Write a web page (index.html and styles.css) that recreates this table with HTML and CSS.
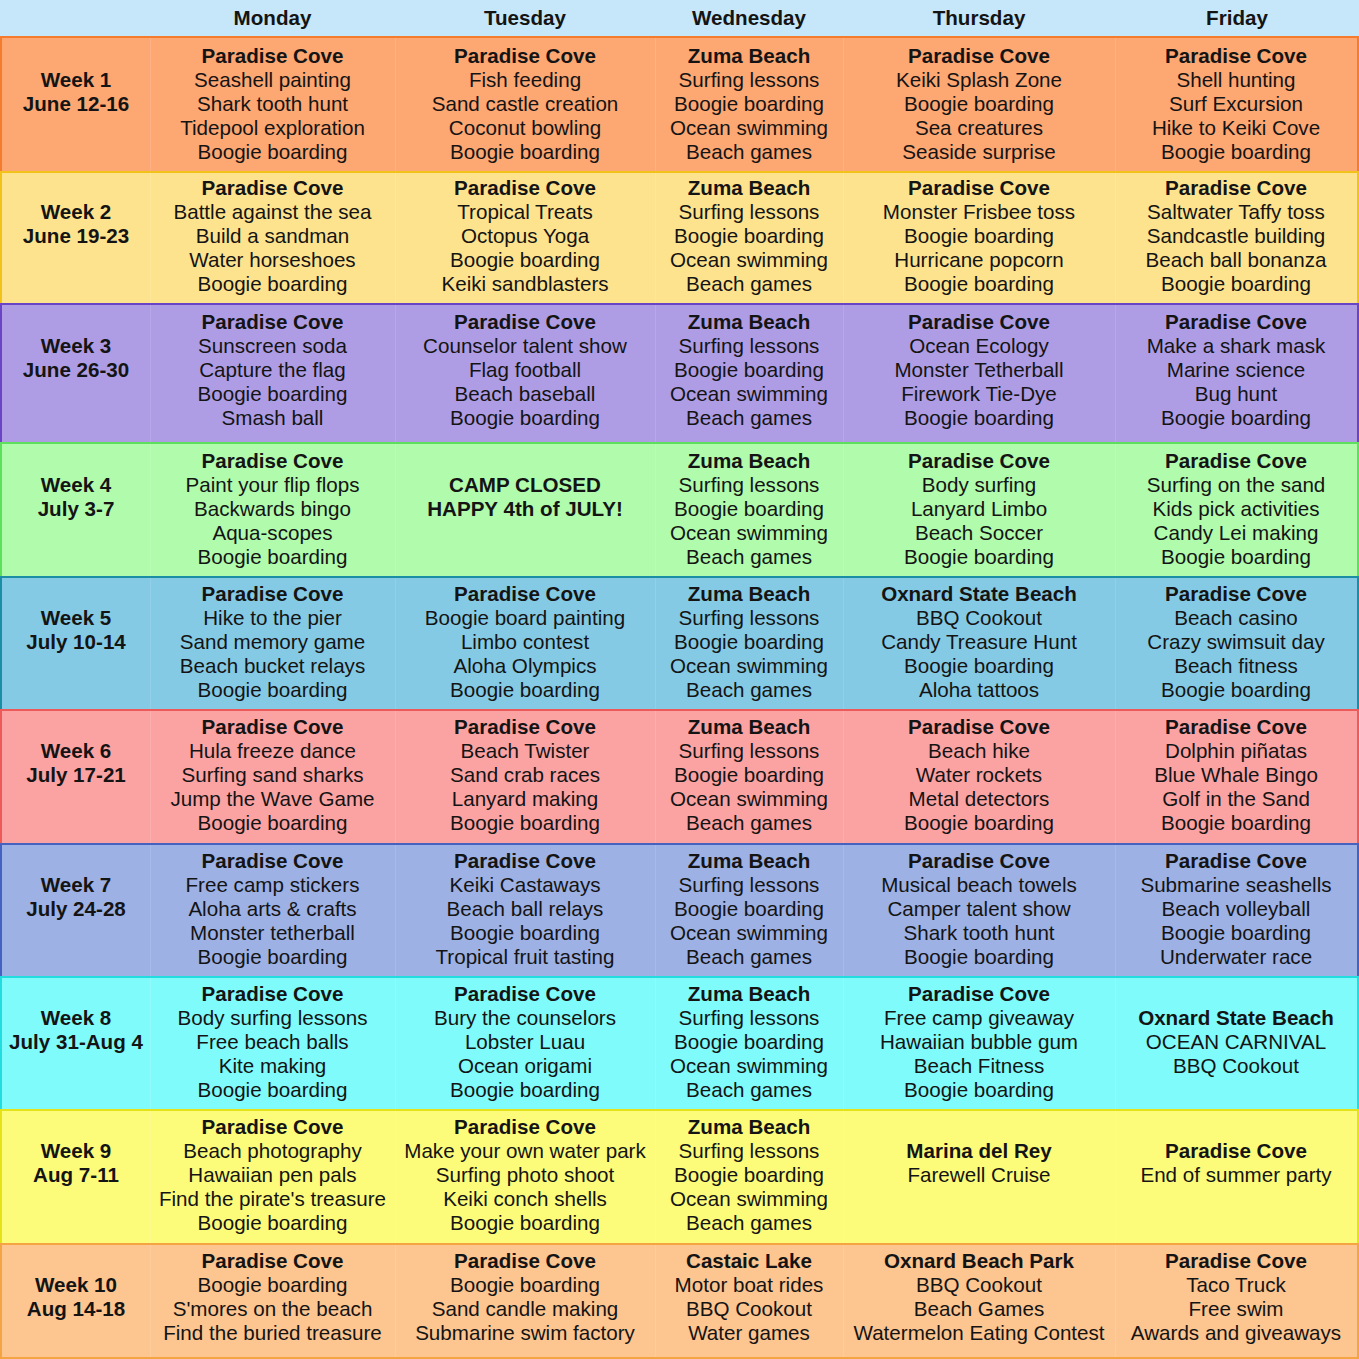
FILE: index.html
```html
<!DOCTYPE html>
<html>
<head>
<meta charset="utf-8">
<link rel="stylesheet" href="styles.css">
</head>
<body>
<div class="schedule">
  <div class="row head">
    <div class="cell"></div>
    <div class="cell"><b>Monday</b></div>
    <div class="cell"><b>Tuesday</b></div>
    <div class="cell"><b>Wednesday</b></div>
    <div class="cell"><b>Thursday</b></div>
    <div class="cell"><b>Friday</b></div>
  </div>

  <div class="row w1">
    <div class="cell label"><b>Week 1</b><b>June 12-16</b></div>
    <div class="cell"><b>Paradise Cove</b><span>Seashell painting</span><span>Shark tooth hunt</span><span>Tidepool exploration</span><span>Boogie boarding</span></div>
    <div class="cell"><b>Paradise Cove</b><span>Fish feeding</span><span>Sand castle creation</span><span>Coconut bowling</span><span>Boogie boarding</span></div>
    <div class="cell"><b>Zuma Beach</b><span>Surfing lessons</span><span>Boogie boarding</span><span>Ocean swimming</span><span>Beach games</span></div>
    <div class="cell"><b>Paradise Cove</b><span>Keiki Splash Zone</span><span>Boogie boarding</span><span>Sea creatures</span><span>Seaside surprise</span></div>
    <div class="cell"><b>Paradise Cove</b><span>Shell hunting</span><span>Surf Excursion</span><span>Hike to Keiki Cove</span><span>Boogie boarding</span></div>
  </div>

  <div class="row w2">
    <div class="cell label"><b>Week 2</b><b>June 19-23</b></div>
    <div class="cell"><b>Paradise Cove</b><span>Battle against the sea</span><span>Build a sandman</span><span>Water horseshoes</span><span>Boogie boarding</span></div>
    <div class="cell"><b>Paradise Cove</b><span>Tropical Treats</span><span>Octopus Yoga</span><span>Boogie boarding</span><span>Keiki sandblasters</span></div>
    <div class="cell"><b>Zuma Beach</b><span>Surfing lessons</span><span>Boogie boarding</span><span>Ocean swimming</span><span>Beach games</span></div>
    <div class="cell"><b>Paradise Cove</b><span>Monster Frisbee toss</span><span>Boogie boarding</span><span>Hurricane popcorn</span><span>Boogie boarding</span></div>
    <div class="cell"><b>Paradise Cove</b><span>Saltwater Taffy toss</span><span>Sandcastle building</span><span>Beach ball bonanza</span><span>Boogie boarding</span></div>
  </div>

  <div class="row w3">
    <div class="cell label"><b>Week 3</b><b>June 26-30</b></div>
    <div class="cell"><b>Paradise Cove</b><span>Sunscreen soda</span><span>Capture the flag</span><span>Boogie boarding</span><span>Smash ball</span></div>
    <div class="cell"><b>Paradise Cove</b><span>Counselor talent show</span><span>Flag football</span><span>Beach baseball</span><span>Boogie boarding</span></div>
    <div class="cell"><b>Zuma Beach</b><span>Surfing lessons</span><span>Boogie boarding</span><span>Ocean swimming</span><span>Beach games</span></div>
    <div class="cell"><b>Paradise Cove</b><span>Ocean Ecology</span><span>Monster Tetherball</span><span>Firework Tie-Dye</span><span>Boogie boarding</span></div>
    <div class="cell"><b>Paradise Cove</b><span>Make a shark mask</span><span>Marine science</span><span>Bug hunt</span><span>Boogie boarding</span></div>
  </div>

  <div class="row w4">
    <div class="cell label"><b>Week 4</b><b>July 3-7</b></div>
    <div class="cell"><b>Paradise Cove</b><span>Paint your flip flops</span><span>Backwards bingo</span><span>Aqua-scopes</span><span>Boogie boarding</span></div>
    <div class="cell label"><b>CAMP CLOSED</b><b>HAPPY 4th of JULY!</b></div>
    <div class="cell"><b>Zuma Beach</b><span>Surfing lessons</span><span>Boogie boarding</span><span>Ocean swimming</span><span>Beach games</span></div>
    <div class="cell"><b>Paradise Cove</b><span>Body surfing</span><span>Lanyard Limbo</span><span>Beach Soccer</span><span>Boogie boarding</span></div>
    <div class="cell"><b>Paradise Cove</b><span>Surfing on the sand</span><span>Kids pick activities</span><span>Candy Lei making</span><span>Boogie boarding</span></div>
  </div>

  <div class="row w5">
    <div class="cell label"><b>Week 5</b><b>July 10-14</b></div>
    <div class="cell"><b>Paradise Cove</b><span>Hike to the pier</span><span>Sand memory game</span><span>Beach bucket relays</span><span>Boogie boarding</span></div>
    <div class="cell"><b>Paradise Cove</b><span>Boogie board painting</span><span>Limbo contest</span><span>Aloha Olympics</span><span>Boogie boarding</span></div>
    <div class="cell"><b>Zuma Beach</b><span>Surfing lessons</span><span>Boogie boarding</span><span>Ocean swimming</span><span>Beach games</span></div>
    <div class="cell"><b>Oxnard State Beach</b><span>BBQ Cookout</span><span>Candy Treasure Hunt</span><span>Boogie boarding</span><span>Aloha tattoos</span></div>
    <div class="cell"><b>Paradise Cove</b><span>Beach casino</span><span>Crazy swimsuit day</span><span>Beach fitness</span><span>Boogie boarding</span></div>
  </div>

  <div class="row w6">
    <div class="cell label"><b>Week 6</b><b>July 17-21</b></div>
    <div class="cell"><b>Paradise Cove</b><span>Hula freeze dance</span><span>Surfing sand sharks</span><span>Jump the Wave Game</span><span>Boogie boarding</span></div>
    <div class="cell"><b>Paradise Cove</b><span>Beach Twister</span><span>Sand crab races</span><span>Lanyard making</span><span>Boogie boarding</span></div>
    <div class="cell"><b>Zuma Beach</b><span>Surfing lessons</span><span>Boogie boarding</span><span>Ocean swimming</span><span>Beach games</span></div>
    <div class="cell"><b>Paradise Cove</b><span>Beach hike</span><span>Water rockets</span><span>Metal detectors</span><span>Boogie boarding</span></div>
    <div class="cell"><b>Paradise Cove</b><span>Dolphin piñatas</span><span>Blue Whale Bingo</span><span>Golf in the Sand</span><span>Boogie boarding</span></div>
  </div>

  <div class="row w7">
    <div class="cell label"><b>Week 7</b><b>July 24-28</b></div>
    <div class="cell"><b>Paradise Cove</b><span>Free camp stickers</span><span>Aloha arts &amp; crafts</span><span>Monster tetherball</span><span>Boogie boarding</span></div>
    <div class="cell"><b>Paradise Cove</b><span>Keiki Castaways</span><span>Beach ball relays</span><span>Boogie boarding</span><span>Tropical fruit tasting</span></div>
    <div class="cell"><b>Zuma Beach</b><span>Surfing lessons</span><span>Boogie boarding</span><span>Ocean swimming</span><span>Beach games</span></div>
    <div class="cell"><b>Paradise Cove</b><span>Musical beach towels</span><span>Camper talent show</span><span>Shark tooth hunt</span><span>Boogie boarding</span></div>
    <div class="cell"><b>Paradise Cove</b><span>Submarine seashells</span><span>Beach volleyball</span><span>Boogie boarding</span><span>Underwater race</span></div>
  </div>

  <div class="row w8">
    <div class="cell label"><b>Week 8</b><b>July 31-Aug 4</b></div>
    <div class="cell"><b>Paradise Cove</b><span>Body surfing lessons</span><span>Free beach balls</span><span>Kite making</span><span>Boogie boarding</span></div>
    <div class="cell"><b>Paradise Cove</b><span>Bury the counselors</span><span>Lobster Luau</span><span>Ocean origami</span><span>Boogie boarding</span></div>
    <div class="cell"><b>Zuma Beach</b><span>Surfing lessons</span><span>Boogie boarding</span><span>Ocean swimming</span><span>Beach games</span></div>
    <div class="cell"><b>Paradise Cove</b><span>Free camp giveaway</span><span>Hawaiian bubble gum</span><span>Beach Fitness</span><span>Boogie boarding</span></div>
    <div class="cell label"><b>Oxnard State Beach</b><span>OCEAN CARNIVAL</span><span>BBQ Cookout</span></div>
  </div>

  <div class="row w9">
    <div class="cell label"><b>Week 9</b><b>Aug 7-11</b></div>
    <div class="cell"><b>Paradise Cove</b><span>Beach photography</span><span>Hawaiian pen pals</span><span>Find the pirate's treasure</span><span>Boogie boarding</span></div>
    <div class="cell"><b>Paradise Cove</b><span>Make your own water park</span><span>Surfing photo shoot</span><span>Keiki conch shells</span><span>Boogie boarding</span></div>
    <div class="cell"><b>Zuma Beach</b><span>Surfing lessons</span><span>Boogie boarding</span><span>Ocean swimming</span><span>Beach games</span></div>
    <div class="cell label"><b>Marina del Rey</b><span>Farewell Cruise</span></div>
    <div class="cell label"><b>Paradise Cove</b><span>End of summer party</span></div>
  </div>

  <div class="row w10">
    <div class="cell label"><b>Week 10</b><b>Aug 14-18</b></div>
    <div class="cell"><b>Paradise Cove</b><span>Boogie boarding</span><span>S'mores on the beach</span><span>Find the buried treasure</span></div>
    <div class="cell"><b>Paradise Cove</b><span>Boogie boarding</span><span>Sand candle making</span><span>Submarine swim factory</span></div>
    <div class="cell"><b>Castaic Lake</b><span>Motor boat rides</span><span>BBQ Cookout</span><span>Water games</span></div>
    <div class="cell"><b>Oxnard Beach Park</b><span>BBQ Cookout</span><span>Beach Games</span><span>Watermelon Eating Contest</span></div>
    <div class="cell"><b>Paradise Cove</b><span>Taco Truck</span><span>Free swim</span><span>Awards and giveaways</span></div>
  </div>
</div>
</body>
</html>
```

FILE: styles.css
```css
html, body {
  margin: 0;
  padding: 0;
}

body {
  font-family: "Liberation Sans", Arial, sans-serif;
  font-size: 20.6px;
  line-height: 24px;
  color: #141414;
  background: #ffffff;
}

.schedule {
  width: 1359px;
  display: flex;
  flex-direction: column;
}

.row {
  display: grid;
  grid-template-columns: 148px 245px 260px 188px 272px 242px;
  box-sizing: border-box;
  border-style: solid;
  border-width: 2px 2px 0 2px;
}

.cell {
  display: flex;
  flex-direction: column;
  align-items: center;
  text-align: center;
  white-space: nowrap;
  padding-top: 4px;
  box-shadow: inset 1px 0 0 rgba(255, 255, 255, 0.12);
}

.cell:first-child {
  box-shadow: none;
}

.cell b {
  font-weight: bold;
}

.label {
  padding-top: 28px;
}

.head {
  height: 36px;
  background: #c6e7fa;
  border-width: 0;
  grid-template-columns: 150px 245px 260px 188px 272px 244px;
}

.head .cell {
  padding-top: 6px;
  box-shadow: none;
}

.w1 { height: 135px; background: #fda773; border-color: #f47c2c; }
.w1 .cell { padding-top: 6px; }
.w1 .label { padding-top: 30px; }
.w2 { height: 132px; background: #fee38e; border-color: #f2c21a; }
.w2 .cell { padding-top: 3px; }
.w2 .label { padding-top: 27px; }
.w3 { height: 139px; background: #ae9de4; border-color: #6a44c6; }
.w3 .cell { padding-top: 5px; }
.w3 .label { padding-top: 29px; }
.w4 { height: 134px; background: #b1fbac; border-color: #5fe05c; }
.w4 .cell { padding-top: 5px; }
.w4 .label { padding-top: 29px; }
.w5 { height: 133px; background: #85cae4; border-color: #1b8ea6; }
.w6 { height: 134px; background: #fba3a3; border-color: #ee5a5a; }
.w7 { height: 133px; background: #9db1e4; border-color: #4562c0; }
.w8 { height: 133px; background: #80fbfb; border-color: #22dde0; }
.w9 { height: 134px; background: #fdfc7a; border-color: #e6e21a; }
.w10 { height: 116px; background: #fdc590; border-color: #f5a443; border-bottom-width: 2px; }
```
